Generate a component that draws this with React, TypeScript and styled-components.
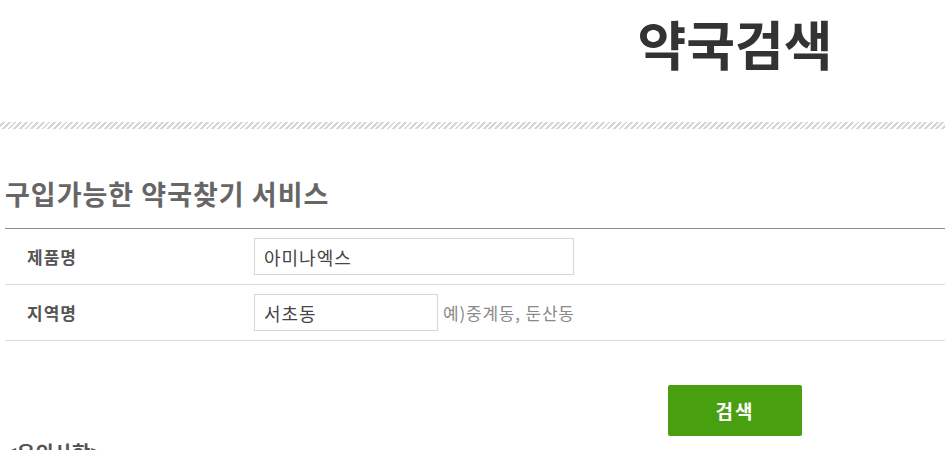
import styled, { createGlobalStyle } from "styled-components";

const GlobalStyle = createGlobalStyle`
  html, body {
    margin: 0;
    padding: 0;
    overflow: hidden;
    background: #fff;
  }
  body {
    font-family: "Noto Sans CJK KR", "Noto Sans", sans-serif;
    color: #333;
  }
  * {
    box-sizing: border-box;
  }
`;

const Page = styled.div`
  width: 1465px;
  padding-left: 5px;
`;

const Header = styled.header`
  height: 122px;
  display: flex;
  justify-content: center;
  align-items: flex-start;
  padding-top: 8px;
`;

const Title = styled.h1`
  margin: 0;
  font-size: 53px;
  line-height: 70px;
  font-weight: 700;
  color: #333;
  letter-spacing: 0;
`;

const Hatch = styled.div`
  height: 7px;
  margin-left: -5px;
  background: repeating-linear-gradient(
    135deg,
    #fff 0,
    #fff 2px,
    #d6d6d6 2px,
    #d6d6d6 4px
  );
`;

const SubTitle = styled.h2`
  margin: 49px 0 0;
  font-size: 27px;
  line-height: 32px;
  font-weight: 700;
  color: #666;
  letter-spacing: 1px;
`;

const Form = styled.div`
  margin-top: 18px;
  width: 940px;
  border-top: 1px solid #8c8c8c;
`;

const Row = styled.div`
  display: grid;
  grid-template-columns: 249px 1fr;
  align-items: center;
  height: 56px;
  border-bottom: 1px solid #dcdcdc;
`;

const Label = styled.div`
  padding-left: 22px;
  font-size: 17px;
  font-weight: 700;
  color: #555;
  letter-spacing: 1px;
`;

const Field = styled.div`
  display: flex;
  align-items: center;
  gap: 5px;
`;

const Input = styled.input<{ $w: number }>`
  width: ${(p) => p.$w}px;
  height: 37px;
  border: 1px solid #d5d5d5;
  padding: 0 9px;
  font-family: "Noto Sans CJK KR", "Noto Sans", sans-serif;
  font-size: 18px;
  letter-spacing: 1px;
  color: #444;
  outline: none;
`;

const Hint = styled.span`
  font-size: 17px;
  color: #8a8a8a;
  letter-spacing: 0.8px;
`;

const Actions = styled.div`
  display: flex;
  justify-content: center;
  padding-top: 44px;
`;

const SearchButton = styled.button`
  width: 134px;
  height: 51px;
  border: none;
  border-radius: 2px;
  background: #48a010;
  color: #fff;
  font-family: "Noto Sans CJK KR", "Noto Sans", sans-serif;
  font-size: 19px;
  font-weight: 700;
  letter-spacing: 2px;
  cursor: pointer;
`;

const Notice = styled.h3`
  margin: 2px 0 0;
  font-size: 20px;
  line-height: 30px;
  font-weight: 700;
  color: #555;
`;

function App() {
  return (
    <>
      <GlobalStyle />
      <Page>
        <Header>
          <Title>약국검색</Title>
        </Header>
        <Hatch />
        <SubTitle>구입가능한 약국찾기 서비스</SubTitle>
        <Form>
          <Row>
            <Label>제품명</Label>
            <Field>
              <Input $w={320} defaultValue="아미나엑스" />
            </Field>
          </Row>
          <Row>
            <Label>지역명</Label>
            <Field>
              <Input $w={184} defaultValue="서초동" />
              <Hint>예)중계동, 둔산동</Hint>
            </Field>
          </Row>
        </Form>
        <Actions>
          <SearchButton>검색</SearchButton>
        </Actions>
        <Notice>&lt;유의사항&gt;</Notice>
      </Page>
    </>
  );
}

export default App;
